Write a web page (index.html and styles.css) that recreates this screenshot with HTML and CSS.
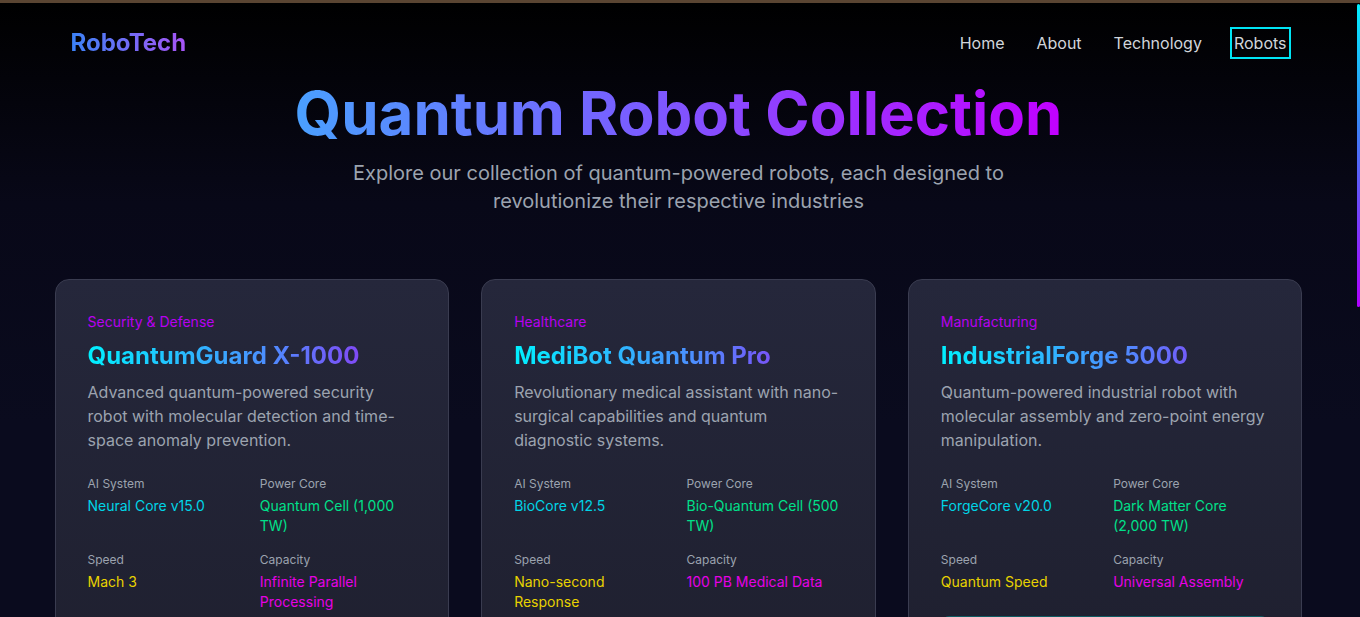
FILE: index.html
```html
<!DOCTYPE html>
<html lang="en">
<head>
<meta charset="utf-8">
<title>RoboTech - Quantum Robot Collection</title>
<link rel="stylesheet" href="styles.css">
</head>
<body>
<div class="scroll-indicator" aria-hidden="true"></div>
<header class="site-header">
  <div class="nav-inner">
    <a href="#" class="logo">RoboTech</a>
    <nav class="nav-links">
      <a href="#">Home</a>
      <a href="#">About</a>
      <a href="#">Technology</a>
      <a href="#" class="active">Robots</a>
    </nav>
  </div>
</header>
<main class="container">
  <section class="hero">
    <h1 class="hero-title">Quantum Robot Collection</h1>
    <p class="hero-sub">Explore our collection of quantum-powered robots, each designed to revolutionize their respective industries</p>
  </section>
  <section class="cards">
    <article class="card">
      <div class="category">Security &amp; Defense</div>
      <h2 class="card-title">QuantumGuard X-1000</h2>
      <p class="card-desc">Advanced quantum-powered security robot with molecular detection and time-space anomaly prevention.</p>
      <dl class="specs">
        <div class="spec"><dt>AI System</dt><dd class="c-cyan">Neural Core v15.0</dd></div>
        <div class="spec"><dt>Power Core</dt><dd class="c-green">Quantum Cell (1,000 TW)</dd></div>
        <div class="spec"><dt>Speed</dt><dd class="c-yellow">Mach 3</dd></div>
        <div class="spec"><dt>Capacity</dt><dd class="c-magenta">Infinite Parallel Processing</dd></div>
      </dl>
      <button class="card-btn">View Details</button>
    </article>
    <article class="card">
      <div class="category">Healthcare</div>
      <h2 class="card-title">MediBot Quantum Pro</h2>
      <p class="card-desc">Revolutionary medical assistant with nano-surgical capabilities and quantum diagnostic systems.</p>
      <dl class="specs">
        <div class="spec"><dt>AI System</dt><dd class="c-cyan">BioCore v12.5</dd></div>
        <div class="spec"><dt>Power Core</dt><dd class="c-green">Bio-Quantum Cell (500 TW)</dd></div>
        <div class="spec"><dt>Speed</dt><dd class="c-yellow">Nano-second Response</dd></div>
        <div class="spec"><dt>Capacity</dt><dd class="c-magenta">100 PB Medical Data</dd></div>
      </dl>
      <button class="card-btn">View Details</button>
    </article>
    <article class="card">
      <div class="category">Manufacturing</div>
      <h2 class="card-title">IndustrialForge 5000</h2>
      <p class="card-desc">Quantum-powered industrial robot with molecular assembly and zero-point energy manipulation.</p>
      <dl class="specs">
        <div class="spec"><dt>AI System</dt><dd class="c-cyan">ForgeCore v20.0</dd></div>
        <div class="spec"><dt>Power Core</dt><dd class="c-green">Dark Matter Core (2,000 TW)</dd></div>
        <div class="spec"><dt>Speed</dt><dd class="c-yellow">Quantum Speed</dd></div>
        <div class="spec"><dt>Capacity</dt><dd class="c-magenta">Universal Assembly</dd></div>
      </dl>
      <button class="card-btn">View Details</button>
    </article>
  </section>
</main>
</body>
</html>
```

FILE: styles.css
```css
* { box-sizing: border-box; }

html {
  background: #0a0b1e;
}

body {
  margin: 0;
  padding-right: 3px;
  border-top: 3px solid #5a4532;
  font-family: Inter, "Noto Sans", sans-serif;
  color: #d1d5db;
  background: linear-gradient(to bottom, #000000 0px, #080818 200px, #0a0b1e 420px, #0a0b1e 100%);
  min-height: 1257px;
}

.scroll-indicator {
  position: fixed;
  top: 4px;
  right: 0;
  width: 3px;
  height: 303px;
  border-radius: 2px;
  background: linear-gradient(to bottom, #00f0ff, #3b82f6 40%, #b000ff);
}

.site-header {
  padding: 24px 0;
}

.nav-inner {
  max-width: 1280px;
  margin: 0 auto;
  padding: 0 32px;
  display: flex;
  align-items: center;
  justify-content: space-between;
}

.logo {
  display: inline-block;
  font-size: 24px;
  line-height: 32px;
  font-weight: 700;
  text-decoration: none;
  background: linear-gradient(90deg, #3b82f6, #a855f7);
  -webkit-background-clip: text;
  background-clip: text;
  color: transparent;
}

.nav-links {
  display: flex;
  gap: 32px;
  line-height: 24px;
  font-size: 16px;
}

.nav-links a {
  color: #d1d5db;
  text-decoration: none;
}

.nav-links a.active {
  outline: 2px solid #00e5f5;
  outline-offset: 2px;
}

.container {
  max-width: 1280px;
  margin: 0 auto;
  padding: 0 16px;
}

.hero {
  text-align: center;
}

.hero-title {
  display: inline-block;
  margin: 0;
  font-size: 60px;
  line-height: 60px;
  font-weight: 700;
  background: linear-gradient(90deg, #4aa0ff, #7a5cff 45%, #c200ff);
  -webkit-background-clip: text;
  background-clip: text;
  color: transparent;
}

.hero-sub {
  max-width: 672px;
  margin: 16px auto 0;
  font-size: 20px;
  line-height: 28px;
  color: #9ca3af;
}

.cards {
  margin-top: 64px;
  display: grid;
  grid-template-columns: repeat(3, 1fr);
  gap: 32px;
  align-items: start;
}

.card {
  border: 1px solid #3a3c50;
  border-radius: 14px;
  background: linear-gradient(to bottom, #25273b, #1e1f2e);
  padding: 32px;
}

.category {
  font-size: 14px;
  line-height: 20px;
  color: #b800f0;
}

.card-title {
  margin: 8px 0 0;
  font-size: 24px;
  line-height: 32px;
  font-weight: 700;
  background: linear-gradient(90deg, #00f0ff, #4d8dff 55%, #a020f0);
  -webkit-background-clip: text;
  background-clip: text;
  color: transparent;
}

.card-desc {
  margin: 8px 0 0;
  font-size: 16px;
  line-height: 24px;
  color: #9ca3af;
}

.specs {
  margin: 24px 0 0;
  display: grid;
  grid-template-columns: 1fr 1fr;
  column-gap: 16px;
  row-gap: 16px;
}

.spec dt {
  font-size: 12px;
  line-height: 16px;
  color: #9ca3af;
}

.spec dd {
  margin: 4px 0 0;
  font-size: 14px;
  line-height: 20px;
}

.c-cyan { color: #00d4e6; }
.c-green { color: #00e08a; }
.c-yellow { color: #e8d200; }
.c-magenta { color: #e600e6; }

.card-btn {
  margin-top: 24px;
  width: 100%;
  padding: 12px 0;
  font: 600 16px/24px Inter, sans-serif;
  color: #00f0ff;
  background: rgba(0, 240, 255, 0.08);
  border: 1px solid #0f5c63;
  border-radius: 8px;
}
```
